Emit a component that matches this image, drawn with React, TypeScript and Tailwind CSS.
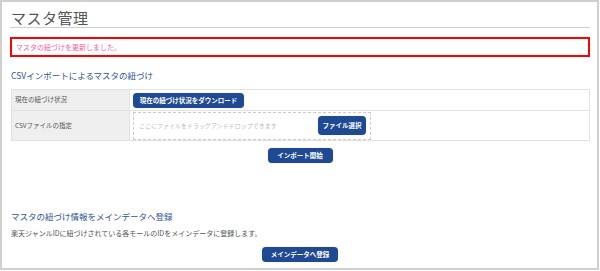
import React from "react";

const F = "font-['Noto_Sans_CJK_JP','Noto_Sans',sans-serif]";

function Btn({ children, className }: { children: React.ReactNode; className: string }) {
  return (
    <button
      className={`bg-[#1f4a93] text-white font-bold text-[6.5px] rounded-[4px] flex items-center justify-center leading-none shadow-[0_0_1px_rgba(0,0,0,0.3)] ${className}`}
    >
      {children}
    </button>
  );
}

export default function App() {
  return (
    <div className={`w-[600px] h-[271px] bg-white ${F}`}>
      <div className="w-[599px] h-[270px] border-2 border-[#cfcfcf] pl-[8px] pr-[7px] pt-[7px] flex flex-col">
        <h1 className="text-[15px] leading-[18px] text-[#555] pl-[1px] border-b border-[#cfcfcf] tracking-[0.5px]">
          マスタ管理
        </h1>
        <div className="mt-[9px] h-[20px] border-2 border-[#ff0000] pl-[4px] flex items-center">
          <span className="text-[7px] leading-none text-[#f0609e]">マスタの紐づけを更新しました。</span>
        </div>
        <h2 className="mt-[12px] text-[8.5px] leading-[12px] text-[#2e5596] pl-[1px]">
          CSVインポートによるマスタの紐づけ
        </h2>
        <div className="mt-[8px] ml-[1px] border border-[#e2e2e2] flex flex-col">
          <div className="flex h-[21px] border-b border-[#e2e2e2]">
            <div className="w-[118px] bg-[#efefef] border-r border-[#e2e2e2] flex items-center pl-[3px] text-[6.5px] text-[#555]">
              現在の紐づけ状況
            </div>
            <div className="flex items-center pl-[3px]">
              <Btn className="w-[111px] h-[15px]">現在の紐づけ状況をダウンロード</Btn>
            </div>
          </div>
          <div className="flex h-[29px]">
            <div className="w-[118px] bg-[#efefef] border-r border-[#e2e2e2] flex items-center pl-[3px] text-[6.5px] text-[#555]">
              CSVファイルの指定
            </div>
            <div className="flex items-center pl-[3px]">
              <div className="w-[238px] h-[28px] border border-dashed border-[#cccccc] flex items-center justify-between pl-[5px] pr-[4px]">
                <span className="text-[6px] text-[#bdbdbd]">ここにファイルをドラッグアンドドロップできます</span>
                <Btn className="w-[48px] h-[19px]">ファイル選択</Btn>
              </div>
            </div>
          </div>
        </div>
        <div className="mt-[7px] flex justify-center">
          <Btn className="w-[65px] h-[15px]">インポート開始</Btn>
        </div>
        <h2 className="mt-[47px] text-[8.5px] leading-[12px] text-[#2e5596] pl-[1px]">
          マスタの紐づけ情報をメインデータへ登録
        </h2>
        <p className="mt-[6px] text-[7px] leading-[10px] text-[#555] pl-[1px]">
          楽天ジャンルIDに紐づけされている各モールのIDをメインデータに登録します。
        </p>
        <div className="mt-[9px] flex justify-center">
          <Btn className="w-[76px] h-[15px]">メインデータへ登録</Btn>
        </div>
      </div>
    </div>
  );
}
